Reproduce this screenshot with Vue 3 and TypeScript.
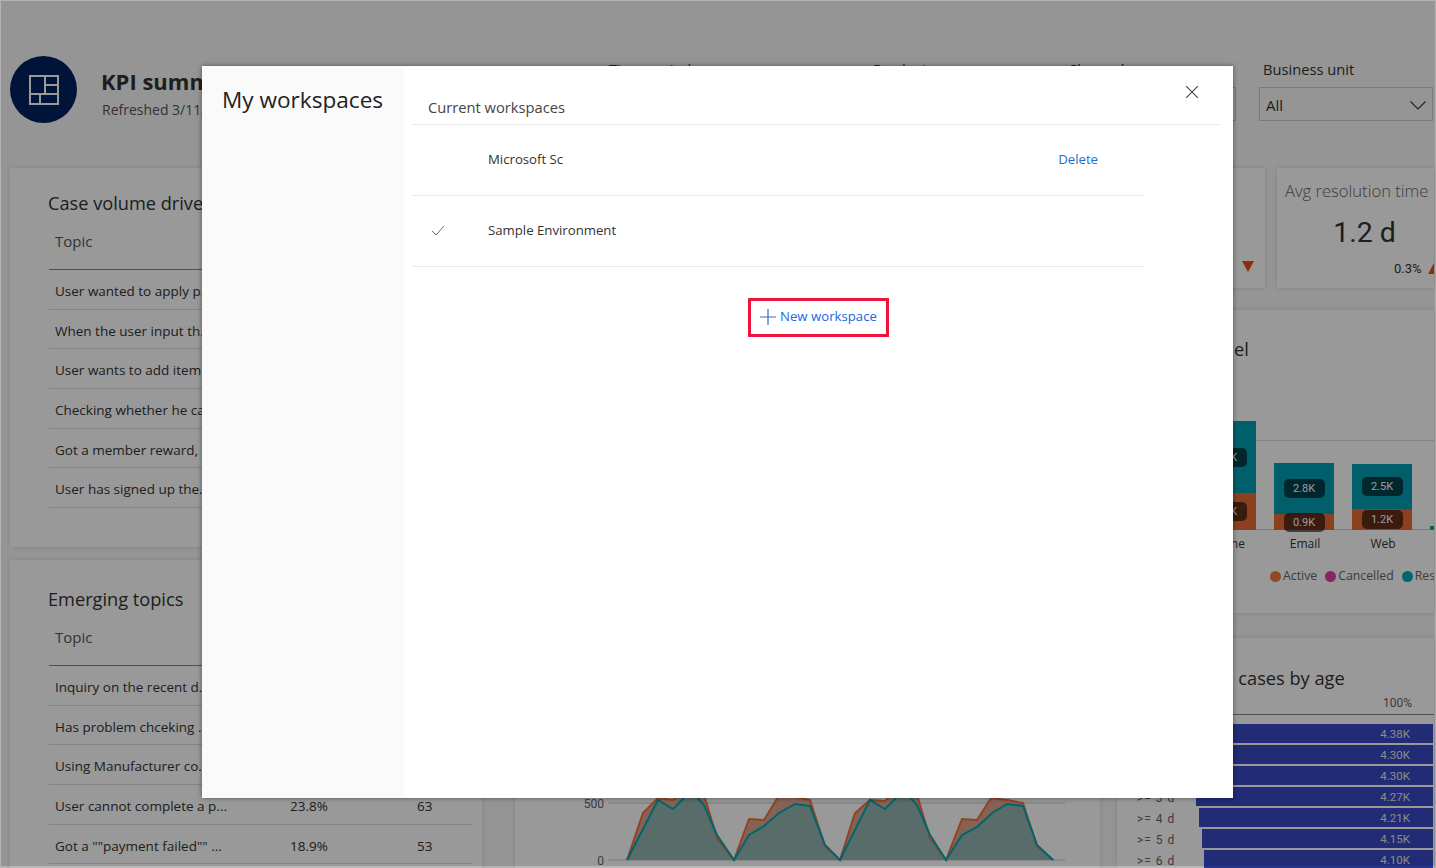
<script setup lang="ts">
interface TopicRow {
  topic: string
  share?: string
  count?: string
}

interface ChannelBar {
  name: string
  resolved: number
  active: number
  resolvedLabel?: string
  activeLabel?: string
}

const caseDrivers: TopicRow[] = [
  { topic: 'User wanted to apply p...' },
  { topic: 'When the user input th...' },
  { topic: 'User wants to add item...' },
  { topic: 'Checking whether he ca...' },
  { topic: 'Got a member reward, ...' },
  { topic: 'User has signed up the...' },
]

const emerging: TopicRow[] = [
  { topic: 'Inquiry on the recent d...' },
  { topic: 'Has problem chceking ...' },
  { topic: 'Using Manufacturer co...' },
  { topic: 'User cannot complete a p...', share: '23.8%', count: '63' },
  { topic: 'Got a ""payment failed"" ...', share: '18.9%', count: '53' },
]

const filters = [
  { label: 'Time period', width: 241 },
  { label: 'Product', width: 172 },
  { label: 'Channel', width: 172 },
  { label: 'Business unit', width: 174 },
]

const channels: ChannelBar[] = [
  { name: 'Phone', resolved: 72, active: 37, resolvedLabel: '5.1K', activeLabel: '2.6K' },
  { name: 'Email', resolved: 51, active: 16, resolvedLabel: '2.8K', activeLabel: '0.9K' },
  { name: 'Web', resolved: 45, active: 21, resolvedLabel: '2.5K', activeLabel: '1.2K' },
  { name: 'Forum', resolved: 3, active: 1 },
]

const legend = [
  { name: 'Active', color: '#f0793f' },
  { name: 'Cancelled', color: '#e040a8' },
  { name: 'Resolved', color: '#00aab8' },
]

const ageRows = [4.38, 4.3, 4.3, 4.27, 4.21, 4.15, 4.1].map((value, index) => ({
  label: `>= ${index} d`,
  text: `${value.toFixed(2)}K`,
  width: 229 + (value - 4.1) * 47,
}))

const tealLine = [
  [627, 860], [658, 800], [673, 809], [685, 797], [697, 797], [704, 805], [717, 835],
  [734, 860], [749, 835], [764, 826], [779, 813], [795, 804], [810, 806], [825, 845],
  [840, 860], [870, 800], [885, 809], [897, 797], [910, 797], [917, 805], [930, 835],
  [946, 860], [962, 835], [977, 827], [992, 813], [1007, 804], [1023, 806], [1037, 845],
  [1053, 860],
]

const orangeLine = [
  [627, 860], [643, 813], [658, 798], [673, 800], [685, 790], [697, 785], [704, 795], [717, 838],
  [734, 860], [749, 819], [764, 820], [778, 797], [795, 797], [810, 800], [825, 846],
  [840, 860], [855, 813], [870, 800], [885, 801], [897, 790], [910, 785], [917, 795], [930, 838],
  [946, 860], [962, 819], [977, 820], [991, 798], [1007, 800], [1023, 803], [1037, 846],
  [1053, 860],
]

const toPoints = (line: number[][]) => line.map((point) => point.join(',')).join(' ')
</script>

<template>
  <div class="page">
    <header class="header">
      <div class="logo">
        <svg width="30" height="30" viewBox="0 0 30 30" fill="none" stroke="#fff" stroke-width="2">
          <rect x="1" y="1" width="28" height="28" />
          <path d="M16 1V19M1 19H29M16 10H29M11 19V29" />
        </svg>
      </div>
      <div class="heading">
        <div class="report-title">KPI summary</div>
        <div class="refreshed">Refreshed 3/11/2021</div>
      </div>
      <div class="filters">
        <div
          v-for="filter in filters"
          :key="filter.label"
          class="filter"
          :style="{ width: filter.width + 'px' }"
        >
          <div class="filter-label">{{ filter.label }}</div>
          <div class="dropdown">
            <span>All</span>
            <svg width="16" height="9" viewBox="0 0 16 9" fill="none" stroke="#333" stroke-width="1.1">
              <path d="M0.5 0.5L8 8L15.5 0.5" />
            </svg>
          </div>
        </div>
      </div>
    </header>

    <main class="board">
      <div class="left-column">
        <section class="card table-card drivers">
          <h2 class="card-title">Case volume drivers</h2>
          <div class="table-head">Topic</div>
          <div v-for="row in caseDrivers" :key="row.topic" class="table-row">
            <span>{{ row.topic }}</span>
          </div>
        </section>

        <section class="card table-card topics">
          <h2 class="card-title">Emerging topics</h2>
          <div class="table-head">Topic</div>
          <div v-for="row in emerging" :key="row.topic" class="table-row">
            <span>{{ row.topic }}</span>
            <span>{{ row.share }}</span>
            <span>{{ row.count }}</span>
          </div>
        </section>
      </div>

      <div class="right-column">
        <div class="kpi-row">
          <section class="card kpi-wide">
            <svg width="12" height="11" viewBox="0 0 12 11"><path d="M0 0H12L6 11Z" fill="#e8500f" /></svg>
          </section>
          <section class="card kpi">
            <div class="kpi-title">Avg resolution time</div>
            <div class="kpi-value">1.2 d</div>
            <div class="kpi-delta">
              <span>0.3%</span>
              <svg width="12" height="11" viewBox="0 0 12 11"><path d="M0 11H12L6 0Z" fill="#e8500f" /></svg>
            </div>
          </section>
        </div>

        <section class="card channel-card">
          <h2 class="card-title">Cases by channel</h2>
          <div class="plot">
            <div v-for="bar in channels" :key="bar.name" class="bar">
              <div class="segment resolved" :style="{ height: bar.resolved + 'px' }">
                <span v-if="bar.resolvedLabel" class="badge">{{ bar.resolvedLabel }}</span>
              </div>
              <div class="segment active" :style="{ height: bar.active + 'px' }">
                <span v-if="bar.activeLabel" class="badge">{{ bar.activeLabel }}</span>
              </div>
            </div>
          </div>
          <div class="bar-names">
            <span v-for="bar in channels" :key="bar.name">{{ bar.name }}</span>
          </div>
          <div class="legend">
            <span v-for="item in legend" :key="item.name" class="legend-item">
              <i :style="{ background: item.color }"></i>{{ item.name }}
            </span>
          </div>
        </section>

        <div class="bottom-row">
          <section class="card trend-card">
            <svg width="560" height="100" viewBox="560 768 560 100">
              <line x1="608" y1="803" x2="1065" y2="803" stroke="#ccc" />
              <line x1="608" y1="860" x2="1065" y2="860" stroke="#ccc" />
              <text x="604" y="808" text-anchor="end" class="axis">500</text>
              <text x="604" y="865" text-anchor="end" class="axis">0</text>
              <polygon :points="toPoints(orangeLine)" fill="#e0a48e" />
              <polygon :points="toPoints(tealLine)" fill="#93b4b0" />
              <polyline :points="toPoints(orangeLine)" fill="none" stroke="#f0703a" stroke-width="2" />
              <polyline :points="toPoints(tealLine)" fill="none" stroke="#00a8b8" stroke-width="2" />
            </svg>
          </section>
          <section class="card age-card">
            <h2 class="card-title">Open cases by age</h2>
            <div class="age-head">100%</div>
            <div v-for="row in ageRows" :key="row.label" class="age-row">
              <span class="age-label">{{ row.label }}</span>
              <span class="age-bar" :style="{ width: row.width + 'px' }">{{ row.text }}</span>
            </div>
          </section>
        </div>
      </div>
    </main>

    <div class="overlay">
      <div class="modal">
        <aside class="sidebar">
          <h1>My workspaces</h1>
        </aside>
        <div class="modal-main">
          <div class="current">Current workspaces</div>
          <div class="workspace">
            <span class="check"></span>
            <span class="workspace-name">Microsoft Sc</span>
            <a class="delete">Delete</a>
          </div>
          <div class="workspace">
            <span class="check">
              <svg width="14" height="11" viewBox="0 0 14 11" fill="none" stroke="#667" stroke-width="1">
                <path d="M1 6L5 10L13 1" />
              </svg>
            </span>
            <span class="workspace-name">Sample Environment</span>
          </div>
          <div class="new-row">
            <button class="new-workspace">
              <svg width="16" height="16" viewBox="0 0 16 16" stroke="#3a6fc0" stroke-width="1.2">
                <path d="M8 0V16M0 8H16" />
              </svg>
              <span>New workspace</span>
            </button>
          </div>
        </div>
        <button class="close" aria-label="Close">
          <svg width="12" height="12" viewBox="0 0 12 12" stroke="#445" stroke-width="1.1">
            <path d="M0 0L12 12M12 0L0 12" />
          </svg>
        </button>
      </div>
    </div>
  </div>
</template>

<style>
html,
body {
  margin: 0;
  overflow: hidden;
}
</style>

<style scoped>
.page {
  position: relative;
  width: 1436px;
  height: 868px;
  box-sizing: border-box;
  padding: 56px 1px 0 10px;
  overflow: hidden;
  background: #f9f9f9;
  color: #333;
  font-family: "Open Sans", "Noto Sans", sans-serif;
}

/* 顶部 */
.header {
  display: flex;
  height: 67px;
  margin-bottom: 45px;
}

.logo {
  width: 67px;
  height: 67px;
  display: flex;
  align-items: center;
  justify-content: center;
  border-radius: 50%;
  background: #002260;
}

.heading {
  margin-left: 24px;
  white-space: nowrap;
}

.report-title {
  margin-top: 9px;
  font-size: 22px;
  line-height: 32px;
  font-weight: 700;
}

.refreshed {
  margin: 3px 0 0 1px;
  font-size: 14px;
  line-height: 20px;
  color: #555;
}

.filters {
  display: flex;
  gap: 23px;
  margin-left: auto;
  margin-right: 2px;
}

.filter-label {
  height: 27px;
  padding: 4px 0 0 4px;
  font-size: 14.7px;
  line-height: 18px;
  white-space: nowrap;
}

.dropdown {
  height: 34px;
  box-sizing: border-box;
  display: flex;
  align-items: center;
  justify-content: space-between;
  padding: 2px 6px 0;
  border: 1px solid #ccc;
  font-size: 15px;
}

/* 主体 */
.board {
  display: grid;
  grid-template-columns: 472px 919px;
  gap: 33px;
}

.left-column {
  display: flex;
  flex-direction: column;
  gap: 13px;
}

.card {
  background: #fff;
  box-shadow: 0 0 6px rgba(0, 0, 0, 0.12);
  overflow: hidden;
}

.card-title {
  margin: 0;
  font-size: 18.2px;
  line-height: 24px;
  font-weight: 400;
  color: #333;
  white-space: nowrap;
}

.table-card {
  padding: 0 10px 0 39px;
}

.drivers {
  height: 379px;
  box-sizing: border-box;
  padding-top: 23px;
}

.topics {
  height: 320px;
  box-sizing: border-box;
  padding-top: 27px;
}

.table-card .card-title {
  margin-left: -1px;
}

.table-head {
  height: 55px;
  box-sizing: border-box;
  padding: 14px 0 0 6px;
  border-bottom: 1px solid #888;
  font-size: 15px;
  line-height: 24px;
  color: #555;
}

.table-row {
  display: grid;
  grid-template-columns: 235px 127px 1fr;
  height: 39.7px;
  box-sizing: border-box;
  padding: 3px 0 0 6px;
  align-items: center;
  border-bottom: 1px solid #ddd;
  font-size: 13.5px;
  white-space: nowrap;
}

.right-column {
  display: flex;
  flex-direction: column;
  min-width: 0;
}

.kpi-row {
  display: flex;
  gap: 12px;
  height: 120px;
  margin-bottom: 22px;
}

.kpi-wide {
  width: 750px;
  display: flex;
  align-items: flex-end;
  justify-content: flex-end;
  padding: 0 11px 16px 0;
  box-sizing: border-box;
}

.kpi {
  flex: 1;
  padding: 10px 0 0 8px;
}

.kpi-title {
  font-size: 16.6px;
  line-height: 26px;
  font-weight: 300;
  color: #666;
  white-space: nowrap;
}

.kpi-value {
  margin-top: 9px;
  padding-left: 10px;
  text-align: center;
  font-family: Roboto, sans-serif;
  font-size: 28.5px;
  line-height: 40px;
}

.kpi-delta {
  display: flex;
  align-items: center;
  gap: 6px;
  margin-top: 8px;
  padding-left: 109px;
  font-family: Roboto, sans-serif;
  font-size: 13px;
  white-space: nowrap;
}

.kpi-delta svg {
  flex: none;
}

.channel-card {
  height: 303px;
  box-sizing: border-box;
  padding: 27px 0 0 597px;
  margin-bottom: 25px;
}

.channel-card .card-title {
  margin-left: -9px;
}

.plot {
  position: relative;
  display: flex;
  align-items: flex-end;
  gap: 18px;
  height: 130px;
  margin: 39px 0 0 84px;
  width: max-content;
}

.plot::before {
  content: "";
  position: absolute;
  left: -84px;
  right: -90px;
  top: 40px;
  border-top: 1px solid #ddd;
}

.plot::after {
  content: "";
  position: absolute;
  left: -84px;
  right: -90px;
  bottom: 0;
  border-top: 1px solid #ccc;
}

.bar {
  position: relative;
  z-index: 1;
  width: 60px;
}

.segment {
  display: flex;
  align-items: center;
  justify-content: center;
}

.resolved {
  background: #009eb3;
}

.active {
  background: #e96b35;
}

.badge {
  flex: none;
  width: 41px;
  height: 19px;
  border-radius: 5px;
  background: rgba(0, 0, 0, 0.58);
  color: #fff;
  font-family: Roboto, sans-serif;
  font-size: 11px;
  line-height: 19px;
  text-align: center;
}

.bar-names {
  display: flex;
  gap: 18px;
  margin: 1px 0 0 85px;
  width: max-content;
  font-size: 12px;
  line-height: 26px;
}

.bar-names span {
  width: 60px;
  text-align: center;
}

.bar-names span:last-child {
  color: #888;
}

.legend {
  display: flex;
  gap: 8px;
  margin: 9px 0 0 158px;
  font-size: 12.3px;
  line-height: 20px;
  color: #666;
  width: max-content;
}

.legend-item {
  display: flex;
  align-items: center;
  gap: 2px;
}

.legend-item i {
  width: 11px;
  height: 11px;
  border-radius: 50%;
}

.bottom-row {
  display: flex;
  gap: 17px;
  height: 230px;
}

.trend-card {
  width: 585px;
  flex: none;
  display: flex;
  align-items: flex-end;
  padding: 0 0 0 45px;
  box-sizing: border-box;
}

.trend-card svg {
  flex: none;
}

.axis {
  font-family: Roboto, sans-serif;
  font-size: 12px;
  fill: #666;
}

.age-card {
  flex: 1;
  padding-top: 28px;
}

.age-card .card-title {
  margin-left: 70px;
}

.age-head {
  height: 25px;
  box-sizing: border-box;
  padding: 6px 22px 0 0;
  margin-bottom: 9px;
  border-bottom: 1px solid #888;
  text-align: right;
  font-family: Roboto, sans-serif;
  font-size: 12px;
  line-height: 14px;
  color: #666;
}

.age-row {
  display: flex;
  justify-content: space-between;
  height: 19px;
  margin-bottom: 2px;
  padding: 0 1px 0 20px;
  align-items: center;
}

.age-label {
  padding-top: 2px;
  font-family: Roboto, sans-serif;
  font-size: 12px;
  letter-spacing: 1px;
  color: #666;
  white-space: nowrap;
}

.age-bar {
  height: 19px;
  box-sizing: border-box;
  padding: 1px 23px 0 0;
  background: #3949c3;
  color: #e6e6e6;
  text-align: right;
  font-family: Roboto, sans-serif;
  font-size: 11.5px;
  line-height: 19px;
}

/* 弹窗 */
.overlay {
  position: absolute;
  inset: 0;
  z-index: 2;
  background: rgba(0, 0, 0, 0.4);
  background-clip: padding-box;
  border: solid rgba(0, 0, 0, 0.28);
  border-width: 1px 1px 2px;
}

.modal {
  position: absolute;
  left: 201px;
  top: 65px;
  width: 1031px;
  height: 732px;
  display: flex;
  background: #fff;
  box-shadow: 0 0 5px rgba(0, 0, 0, 0.45);
}

.sidebar {
  width: 202px;
  flex: none;
  background: #fafafa;
}

.sidebar h1 {
  margin: 18px 0 0 20px;
  font-size: 22.6px;
  line-height: 32px;
  font-weight: 400;
  color: #222;
  white-space: nowrap;
}

.modal-main {
  width: 809px;
  margin-left: 8px;
}

.current {
  height: 59px;
  box-sizing: border-box;
  padding: 30px 0 0 16px;
  border-bottom: 1px solid #e8e8e8;
  font-size: 14.7px;
  line-height: 22px;
  color: #444;
}

.workspace {
  width: 732px;
  height: 71px;
  box-sizing: border-box;
  display: flex;
  align-items: center;
  padding-bottom: 2px;
  border-bottom: 1px solid #e8e8e8;
  font-size: 13.2px;
  color: #333;
}

.check {
  width: 76px;
  flex: none;
  padding-left: 19px;
  box-sizing: border-box;
  display: flex;
}

.workspace-name {
  flex: 1;
}

.delete {
  margin-right: 46px;
  color: #1a6fd0;
}

.new-row {
  display: flex;
  justify-content: center;
  margin-top: 31px;
  padding-left: 4px;
}

.new-workspace {
  width: 141px;
  height: 39px;
  box-sizing: border-box;
  display: flex;
  align-items: center;
  gap: 4px;
  padding: 0 0 2px 9px;
  border: 3px solid #f0143c;
  background: #fff;
  color: #2266e3;
  font-family: inherit;
  font-size: 13.2px;
  white-space: nowrap;
}

.new-workspace svg {
  flex: none;
}

.new-workspace span {
  padding-bottom: 1px;
}

.close {
  position: absolute;
  right: 35px;
  top: 20px;
  padding: 0;
  border: 0;
  display: flex;
  background: transparent;
}
</style>
